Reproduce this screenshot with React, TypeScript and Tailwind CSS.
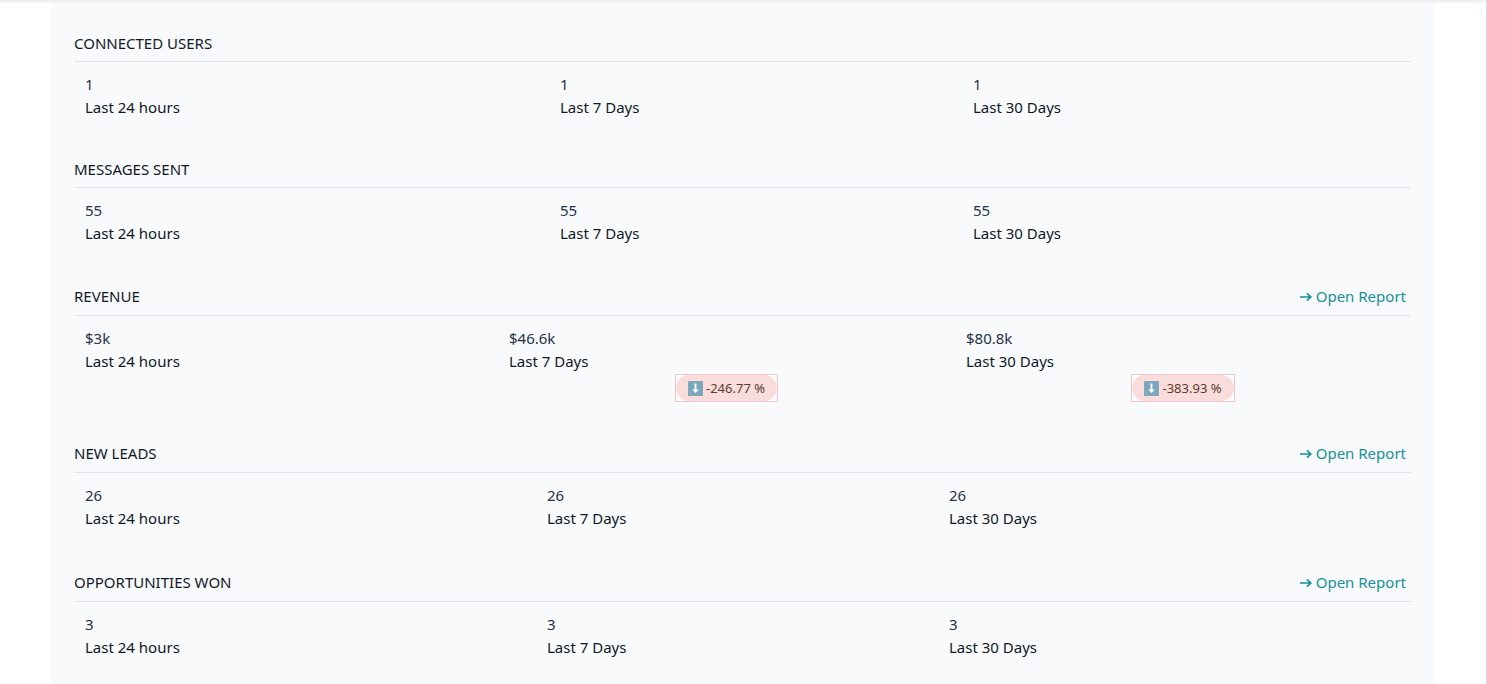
type Metric = { value: string; label: string; change?: string };
type Section = { title: string; columns: string; report?: boolean; metrics: Metric[] };

const sections: Section[] = [
  {
    title: 'CONNECTED USERS',
    columns: 'grid-cols-[475fr_413fr_449fr]',
    metrics: [
      { value: '1', label: 'Last 24 hours' },
      { value: '1', label: 'Last 7 Days' },
      { value: '1', label: 'Last 30 Days' },
    ],
  },
  {
    title: 'MESSAGES SENT',
    columns: 'grid-cols-[475fr_413fr_449fr]',
    metrics: [
      { value: '55', label: 'Last 24 hours' },
      { value: '55', label: 'Last 7 Days' },
      { value: '55', label: 'Last 30 Days' },
    ],
  },
  {
    title: 'REVENUE',
    columns: 'grid-cols-[424fr_457fr_456fr]',
    report: true,
    metrics: [
      { value: '$3k', label: 'Last 24 hours' },
      { value: '$46.6k', label: 'Last 7 Days', change: '-246.77 %' },
      { value: '$80.8k', label: 'Last 30 Days', change: '-383.93 %' },
    ],
  },
  {
    title: 'NEW LEADS',
    columns: 'grid-cols-[462fr_402fr_473fr]',
    report: true,
    metrics: [
      { value: '26', label: 'Last 24 hours' },
      { value: '26', label: 'Last 7 Days' },
      { value: '26', label: 'Last 30 Days' },
    ],
  },
  {
    title: 'OPPORTUNITIES WON',
    columns: 'grid-cols-[462fr_402fr_473fr]',
    report: true,
    metrics: [
      { value: '3', label: 'Last 24 hours' },
      { value: '3', label: 'Last 7 Days' },
      { value: '3', label: 'Last 30 Days' },
    ],
  },
];

function ArrowIcon() {
  return (
    <svg viewBox="0 0 12 10" className="h-[10px] w-3" aria-hidden="true">
      <path d="M0 5h10.5M7 1.4 10.8 5 7 8.6" fill="none" stroke="currentColor" strokeWidth="1.7" />
    </svg>
  );
}

function DownIcon() {
  return (
    <svg viewBox="0 0 15 15" className="size-[15px]" aria-hidden="true">
      <rect width="15" height="15" fill="#79a8c0" />
      <rect x="0.5" y="0.5" width="14" height="14" fill="none" stroke="#8fa9b5" strokeDasharray="2 1" />
      <path d="M6.6 2.5h1.8v5.9h2.4L7.5 12.1 4.2 8.4h2.4z" fill="#fff" />
    </svg>
  );
}

function ChangeBadge({ change }: { change: string }) {
  return (
    <div className="flex justify-center">
      <span className="border border-[#f5c6cb] bg-white">
        <span className="flex h-[26px] items-center gap-[3px] rounded-full bg-[#f8dddc] px-3 text-[13px] text-[#5f3a2a]">
          <DownIcon />
          {change}
        </span>
      </span>
    </div>
  );
}

function MetricSection({ title, columns, report, metrics }: Section) {
  return (
    <section className={report ? 'pb-[39px]' : 'pb-[38px]'}>
      <div className={`flex justify-between border-b border-[#e2e4e8] ${report ? 'h-8 leading-[25px]' : 'h-[30px]'}`}>
        <h2>{title}</h2>
        {report && (
          <a href="#report" className="mr-[5px] flex items-center gap-1 self-start text-[#17919a]">
            <ArrowIcon />
            Open Report
          </a>
        )}
      </div>
      <dl className={`grid pt-[11px] ${columns}`}>
        {metrics.map(({ value, label, change }) => (
          <div key={label} className="flex flex-col">
            <dt className="order-2 px-[11px] pb-px">{label}</dt>
            <dd className="order-1 px-[11px] text-[#243249]">{value}</dd>
            {change && (
              <dd className="order-3">
                <ChangeBadge change={change} />
              </dd>
            )}
          </div>
        ))}
      </dl>
    </section>
  );
}

export default function App() {
  return (
    <div className="min-h-screen border-r border-[#d5d8dc] bg-white font-['Noto_Sans',sans-serif] text-[15px] leading-[23px] text-[#111827]">
      <div className="relative">
        <div className="absolute inset-x-0 top-0 h-1 bg-linear-to-b from-[#e9ebec] to-transparent" />
        <main className="mr-[52px] ml-[51px] bg-[#f9fafc] px-[23px] pt-8">
          {sections.map((section) => (
            <MetricSection key={section.title} {...section} />
          ))}
        </main>
      </div>
    </div>
  );
}
